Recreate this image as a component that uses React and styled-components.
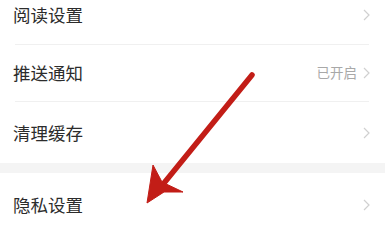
import React from "react";
import styled, { createGlobalStyle } from "styled-components";

const Global = createGlobalStyle`
  html, body { margin: 0; padding: 0; background: #ffffff; }
  body { font-family: "Noto Sans CJK SC", "Noto Sans", sans-serif; overflow: hidden; }
`;

const Page = styled.div`
  position: relative;
  width: 385px;
  height: 236px;
  overflow: hidden;
  background: #fff;
`;

const Group = styled.div`
  display: flex;
  flex-direction: column;
  margin-top: ${(p) => p.$offset || 0}px;
`;

const Row = styled.div`
  display: flex;
  align-items: center;
  justify-content: space-between;
  height: ${(p) => p.$h}px;
  padding: 0 15px 0 13px;
  box-sizing: border-box;
`;

const Label = styled.span`
  font-size: 17.5px;
  color: #2c2c2c;
  line-height: 1;
`;

const Right = styled.div`
  display: flex;
  align-items: center;
  gap: 6px;
`;

const Status = styled.span`
  font-size: 13.5px;
  color: #a8a8a8;
  line-height: 1;
`;

const Divider = styled.div`
  height: 1px;
  margin-left: 15px;
  margin-right: 16px;
  background: #f0f0f0;
`;

const Band = styled.div`
  height: 10px;
  background: #f4f4f4;
`;

const Overlay = styled.svg`
  position: absolute;
  left: 0;
  top: 0;
  pointer-events: none;
`;

const Chevron = () => (
  <svg width="7" height="12" viewBox="0 0 7 12">
    <path d="M1 1 L6 6 L1 11" fill="none" stroke="#d0d0d0" strokeWidth="1.2" />
  </svg>
);

export default function App() {
  return (
    <Page>
      <Global />
      <Group $offset={-15}>
        <Row $h={59}>
          <Label>阅读设置</Label>
          <Chevron />
        </Row>
        <Divider />
        <Row $h={56}>
          <Label>推送通知</Label>
          <Right>
            <Status>已开启</Status>
            <Chevron />
          </Right>
        </Row>
        <Divider />
        <Row $h={61}>
          <Label>清理缓存</Label>
          <Chevron />
        </Row>
      </Group>
      <Band />
      <Group>
        <Row $h={63}>
          <Label>隐私设置</Label>
          <Chevron />
        </Row>
      </Group>
      <Overlay width="385" height="236" viewBox="0 0 385 236">
        <line x1="252" y1="75" x2="160" y2="188" stroke="#c21d17" strokeWidth="5.5" strokeLinecap="round" />
        <path d="M147 203 L153 165 L162 182 L183 192 L164 192 Z" fill="#c21d17" stroke="#c21d17" strokeWidth="1" strokeLinejoin="round" />
      </Overlay>
    </Page>
  );
}
